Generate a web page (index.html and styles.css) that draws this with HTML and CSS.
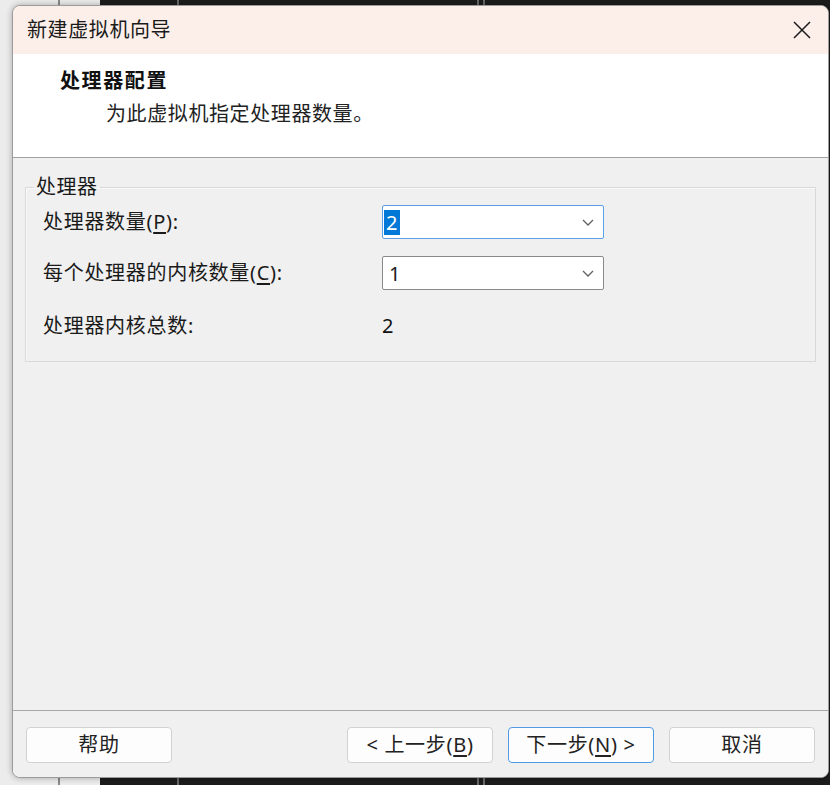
FILE: index.html
```html
<!DOCTYPE html>
<html lang="zh-CN">
<head>
<meta charset="utf-8">
<title>新建虚拟机向导</title>
<link rel="stylesheet" href="styles.css">
</head>
<body>
<div class="desktop">
  <div class="bg-line-left"></div>
  <div class="bg-window">
    <div class="bg-line bl1"></div>
    <div class="bg-line bl2"></div>
    <div class="bg-line bl3"></div>
  </div>
  <div class="dialog">
    <div class="titlebar">
      <span class="title">新建虚拟机向导</span>
      <span class="close" aria-label="关闭">
        <svg width="18" height="18" viewBox="0 0 18 18"><path d="M1 1 L17 17 M17 1 L1 17" stroke="#1a1a1a" stroke-width="1.5" fill="none"/></svg>
      </span>
    </div>
    <div class="header">
      <div class="h-title">处理器配置</div>
      <div class="h-sub">为此虚拟机指定处理器数量。</div>
    </div>
    <div class="content">
      <fieldset class="group">
        <legend>处理器</legend>
        <div class="rows">
          <div class="label">处理器数量(<u>P</u>):</div>
          <div class="combo focused">
            <span class="sel">2</span>
            <svg class="chev" width="12" height="7" viewBox="0 0 12 7"><path d="M1 1 L6 6 L11 1" stroke="#606060" stroke-width="1.3" fill="none"/></svg>
          </div>
          <div class="label">每个处理器的内核数量(<u>C</u>):</div>
          <div class="combo">
            <span class="val">1</span>
            <svg class="chev" width="12" height="7" viewBox="0 0 12 7"><path d="M1 1 L6 6 L11 1" stroke="#606060" stroke-width="1.3" fill="none"/></svg>
          </div>
          <div class="label last">处理器内核总数:</div>
          <div class="total last">2</div>
        </div>
      </fieldset>
    </div>
    <div class="footer">
      <button class="btn">帮助</button>
      <div class="spacer"></div>
      <button class="btn">&lt; 上一步(<u>B</u>)</button>
      <button class="btn default">下一步(<u>N</u>) &gt;</button>
      <button class="btn">取消</button>
    </div>
  </div>
</div>
</body>
</html>
```
FILE: styles.css
```css
* { box-sizing: border-box; }
html, body { margin: 0; padding: 0; }
body {
  width: 830px;
  height: 785px;
  overflow: hidden;
  background: #ececec;
  font-family: "Noto Sans", "Noto Sans CJK SC", sans-serif;
  color: #1a1a1a;
}
.desktop {
  position: relative;
  width: 830px;
  height: 785px;
}
.bg-line-left {
  position: absolute;
  left: 58px;
  top: 0;
  bottom: 0;
  width: 2px;
  background: #8a8a8a;
}
.bg-window {
  position: absolute;
  left: 100px;
  top: 0;
  right: 0;
  bottom: 0;
  background: #1c1c1c;
}
.bg-line {
  position: absolute;
  top: 0;
  bottom: 0;
  width: 2px;
  background: #6a6a6a;
}
.bl1 { left: 77px; }
.bl2 { left: 377px; }
.bl3 { left: 383px; }

.dialog {
  position: absolute;
  left: 12px;
  top: 5px;
  width: 817px;
  height: 773px;
  border: 1px solid #9c9c9c;
  border-radius: 8px;
  overflow: hidden;
  background: #f0f0f0;
  box-shadow: 0 0 6px rgba(0, 0, 0, 0.3);
  display: flex;
  flex-direction: column;
}
.titlebar {
  height: 48px;
  flex: none;
  background: #fcefe9;
  display: flex;
  align-items: center;
  justify-content: space-between;
  padding: 0 17px 0 14px;
}
.title {
  font-size: 20px;
  line-height: 24px;
  color: #1a1a1a;
  letter-spacing: 0.6px;
}
.close {
  display: flex;
  width: 18px;
  height: 18px;
}
.header {
  height: 104px;
  flex: none;
  background: #ffffff;
  border-bottom: 1px solid #a0a0a0;
  padding: 15px 0 0 47px;
}
.h-title {
  font-size: 20px;
  line-height: 24px;
  font-weight: bold;
  letter-spacing: 1.6px;
  color: #111;
}
.h-sub {
  margin: 9px 0 0 46px;
  font-size: 20px;
  line-height: 24px;
  letter-spacing: 0.6px;
  color: #222;
}
.content {
  flex: 1;
  background: #f0f0f0;
  padding: 19px 12px 0 12px;
}
.group {
  margin: 0;
  padding: 0 0 20px 8px;
  border: 1px solid #d9d9d9;
  box-shadow: inset 1px 1px 0 #fafafa;
}
.group legend {
  padding: 0 2px;
  font-size: 20px;
  line-height: 20px;
  color: #1a1a1a;
  letter-spacing: 0.5px;
}
.rows {
  margin-top: 8px;
  padding-left: 9px;
  display: grid;
  grid-template-columns: 339px 222px;
  grid-auto-rows: 34px;
  row-gap: 17px;
  align-items: center;
}
.label {
  font-size: 20px;
  line-height: 24px;
  letter-spacing: 0.7px;
  color: #1a1a1a;
}
.last { margin-top: 3px; }
.label u, .btn u { text-underline-offset: 3px; }
.combo {
  height: 34px;
  background: #ffffff;
  border: 1px solid #8a8a8a;
  border-radius: 2px;
  display: flex;
  align-items: center;
  justify-content: space-between;
  padding: 0 9px 0 1px;
  font-size: 20px;
}
.combo.focused {
  border: 1.5px solid #5aa0e6;
}
.sel {
  background: #0078d7;
  color: #ffffff;
  line-height: 25px;
  padding: 0 3px 0 2px;
}
.val {
  padding-left: 5px;
  line-height: 25px;
}
.chev { flex: none; }
.total {
  font-size: 20px;
  line-height: 24px;
  color: #111;
}
.footer {
  height: 67px;
  flex: none;
  border-top: 1px solid #a8a8a8;
  background: #f0f0f0;
  display: flex;
  align-items: flex-start;
  gap: 15px;
  padding: 16px 13px 0 13px;
}
.spacer { flex: 1; }
.btn {
  width: 146px;
  height: 36px;
  margin: 0;
  background: #fdfdfd;
  border: 1px solid #d2d2d2;
  border-radius: 4px;
  font-family: "Noto Sans", "Noto Sans CJK SC", sans-serif;
  font-size: 20px;
  line-height: 24px;
  letter-spacing: 0.7px;
  color: #222;
  padding: 0;
}
.btn.default {
  border: 1.5px solid #4f9be6;
}
```
